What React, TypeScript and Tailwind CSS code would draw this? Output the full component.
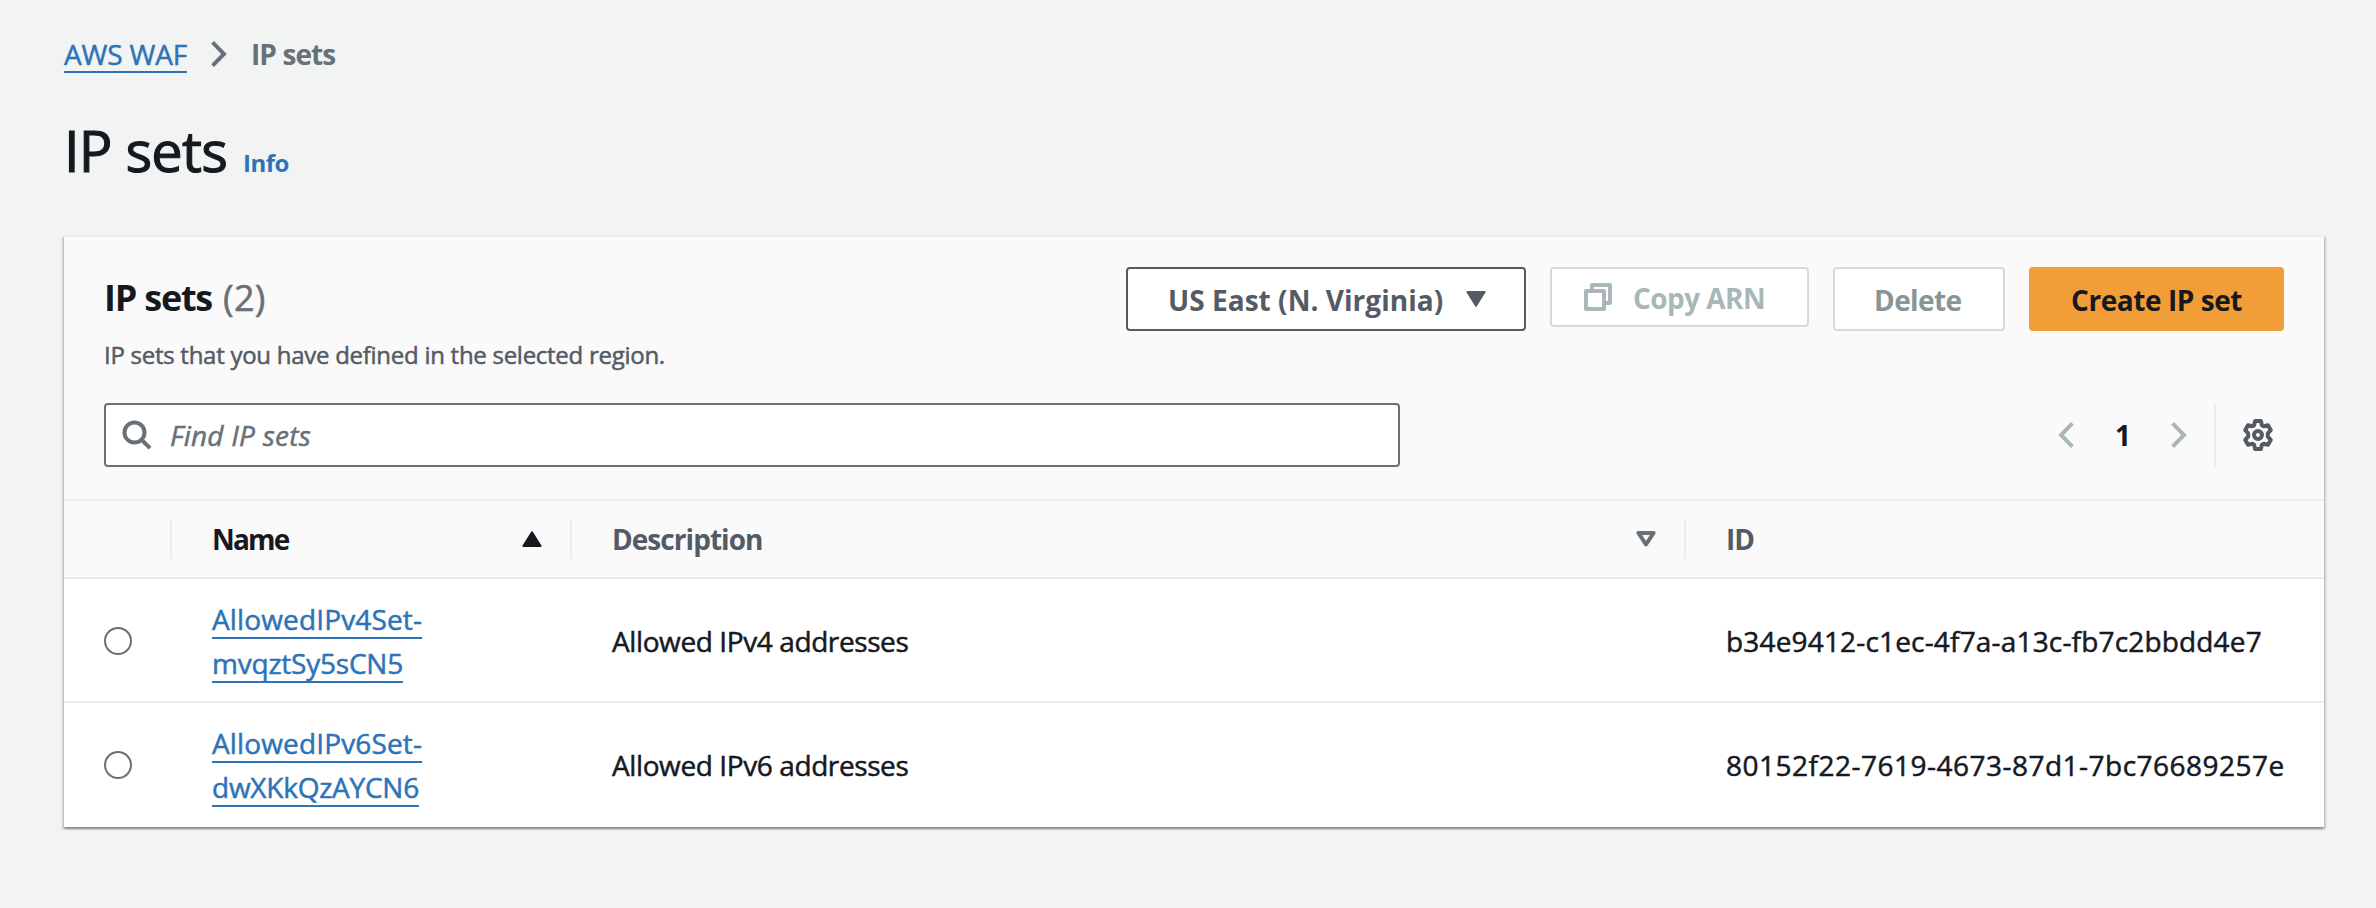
import type { ReactNode } from "react";

const rows = [
  {
    name: ["AllowedIPv4Set-", "mvqztSy5sCN5"],
    tracking: ["tracking-[0.14px]", "tracking-[-0.22px]"],
    description: "Allowed IPv4 addresses",
    id: "b34e9412-c1ec-4f7a-a13c-fb7c2bbdd4e7",
    idTracking: "tracking-[0.17px]",
  },
  {
    name: ["AllowedIPv6Set-", "dwXKkQzAYCN6"],
    tracking: ["tracking-[0.14px]", "tracking-[-0.24px]"],
    description: "Allowed IPv6 addresses",
    id: "80152f22-7619-4673-87d1-7bc76689257e",
    idTracking: "tracking-[0.49px]",
  },
];

const linkClass = "text-[#2e73b8] underline decoration-2 [text-decoration-skip-ink:none]";

function Chevron({ flip = false, className }: { flip?: boolean; className: string }) {
  return (
    <svg
      viewBox="0 0 16 28"
      className={`h-7 w-4 shrink-0 ${flip ? "-scale-x-100" : ""} ${className}`}
      fill="none"
      stroke="currentColor"
      strokeWidth="4"
    >
      <path d="M1.6 2.4 13 14 1.6 25.6" />
    </svg>
  );
}

function Triangle({ kind, className = "" }: { kind: "up" | "down" | "outline"; className?: string }) {
  const outline = kind === "outline";
  return (
    <svg
      viewBox="0 0 20 16"
      className={`h-4 w-5 shrink-0 ${kind === "up" ? "rotate-180" : ""} ${className}`}
      fill={outline ? "none" : "currentColor"}
      stroke="currentColor"
      strokeWidth={outline ? 4 : 2}
      strokeLinejoin="round"
    >
      <path d={outline ? "M2.4 2h15.2L10 13.4Z" : "M1.4 1h17.2L10 14.6Z"} />
    </svg>
  );
}

function SearchIcon() {
  return (
    <svg viewBox="0 0 30 30" className="h-[30px] w-[30px] text-[#687078]" fill="none" stroke="currentColor" strokeWidth="4">
      <circle cx="12.5" cy="12.5" r="10" />
      <path d="M19.5 19.7 28.1 28.1" />
    </svg>
  );
}

function CopyIcon() {
  return (
    <svg viewBox="0 0 28 28" className="h-7 w-7 text-[#aab7b8]" fill="none" stroke="currentColor" strokeWidth="4" strokeLinejoin="round">
      <path d="M8 6V2h18v18h-4" />
      <path d="M2 8h18v18H2z" />
    </svg>
  );
}

function GearIcon() {
  return (
    <svg viewBox="0 0 32 32" className="h-8 w-8 text-[#545b64]" fill="none" stroke="currentColor" strokeWidth="4" strokeLinejoin="round">
      <path d="M13.1 2h5.8l1 4.2 1.8 1.1 4.3-1.1 2.8 5-3 3.1v3.4l3 3.1-2.8 5-4.3-1.1-1.8 1.1-1 4.2h-5.8l-1-4.2-1.8-1.1L6 25.8l-2.8-5 3-3.1v-3.4l-3-3.1 2.8-5 4.3 1.1 1.8-1.1Z" />
      <circle cx="16" cy="16" r="4" />
    </svg>
  );
}

function Separator({ className = "" }: { className?: string }) {
  return <div className={`w-0.5 shrink-0 bg-[#eaeded] ${className}`} />;
}

function Button({ className, children }: { className: string; children: ReactNode }) {
  return (
    <button className={`flex items-center rounded-[4px] border-2 font-bold [-webkit-text-stroke:0px] ${className}`}>
      {children}
    </button>
  );
}

export default function App() {
  return (
    <main className="min-h-[908px] bg-[#f2f4f3] px-16 pt-8 font-['Open_Sans','Noto_Sans',sans-serif] text-[28px] leading-[44px] text-[#16191f] [-webkit-text-stroke:0.5px]">
      <nav className="flex h-11 items-center whitespace-nowrap">
        <a className={`w-[123px] tracking-[-0.17px] underline-offset-[6px] ${linkClass}`}>AWS WAF</a>
        <Chevron className="ml-6 text-[#687078]" />
        <span className="ml-6 font-bold tracking-[-0.9px] text-[#687078] [-webkit-text-stroke:0px]">IP sets</span>
      </nav>

      <header className="mt-10 flex h-[68px] items-baseline whitespace-nowrap leading-[68px]">
        <h1 className="w-[179px] text-[56px] tracking-[-0.8px] [-webkit-text-stroke:1.1px]">IP sets</h1>
        <a className="text-2xl font-bold leading-[68px] tracking-[-0.47px] text-[#2e73b8] [-webkit-text-stroke:0px]">Info</a>
      </header>

      <section className="mt-[51px] w-[2260px] border-t-2 border-[#eaeded] bg-white shadow-[0_2px_2px_rgba(0,28,36,0.3),2px_2px_2px_rgba(0,28,36,0.15),-2px_2px_2px_rgba(0,28,36,0.15)]">
        <div className="h-[264px] border-b-2 border-[#eaeded] bg-[#fafafa] px-10 pt-[30px]">
          <div className="flex h-[136px] items-start justify-between whitespace-nowrap">
            <div className="pt-[9px]">
              <h2 className="flex gap-[11px] text-4xl leading-[44px]">
                <span className="font-bold tracking-[-1.22px] [-webkit-text-stroke:0px]">IP sets</span>
                <span className="tracking-[0.3px] text-[#687078]">(2)</span>
              </h2>
              <p className="mt-[17px] text-2xl leading-9 tracking-[-0.27px] text-[#545b64]">
                IP sets that you have defined in the selected region.
              </p>
            </div>
            <div className="flex items-start gap-6">
              <Button className="h-16 w-[400px] gap-[23px] border-[#545b64] bg-white pl-10 text-[#545b64]">
                <span className="pt-px tracking-[0.04px]">US East (N. Virginia)</span>
                <Triangle kind="down" />
              </Button>
              <Button className="h-[60px] w-[259px] gap-[21px] border-[#d5dbdb] bg-white pl-8 tracking-[-0.55px] text-[#aab7b8]">
                <CopyIcon />
                <span className="pt-px">Copy ARN</span>
              </Button>
              <Button className="h-16 w-[172px] border-[#d5dbdb] bg-white pl-[39px] tracking-[-0.6px] text-[#879596]">
                <span className="pt-px">Delete</span>
              </Button>
              <Button className="h-16 w-[255px] justify-center border-[#f19e38] bg-[#f19e38] tracking-[-0.44px] text-[#16191f]">
                <span className="pt-px">Create IP set</span>
              </Button>
            </div>
          </div>

          <div className="flex h-16 items-center justify-between">
            <div className="flex h-16 w-[1296px] items-center gap-[18px] rounded-[4px] border-2 border-[#687078] bg-white pl-4">
              <SearchIcon />
              <span className="italic tracking-[0.25px] text-[#687078]">Find IP sets</span>
            </div>
            <div className="flex h-16 items-center pr-[10px]">
              <Chevron flip className="text-[#aab7b8]" />
              <span className="w-[97px] pl-px text-center font-bold [-webkit-text-stroke:0px]">1</span>
              <Chevron className="text-[#aab7b8]" />
              <Separator className="ml-[27px] mr-[26px] h-16" />
              <GearIcon />
            </div>
          </div>
        </div>

        <div className="grid h-[78px] grid-cols-[106px_400px_1114px_1fr] items-center border-b-2 border-[#eaeded] bg-[#fafafa] font-bold text-[#545b64] [-webkit-text-stroke:0px]">
          <div />
          <div className="flex items-center">
            <Separator className="h-10" />
            <span className="ml-10 flex-1 tracking-[-1.8px] text-[#16191f]">Name</span>
            <Triangle kind="up" className="mr-[28px] text-[#16191f]" />
          </div>
          <div className="flex items-center">
            <Separator className="h-10" />
            <span className="ml-10 flex-1 tracking-[-0.95px]">Description</span>
            <Triangle kind="outline" className="mr-[28px] text-[#687078]" />
          </div>
          <div className="flex items-center">
            <Separator className="h-10" />
            <span className="ml-10 tracking-[-1px]">ID</span>
          </div>
        </div>

        {rows.map((row, i) => (
          <div
            key={row.id}
            className={`grid h-[124px] grid-cols-[148px_400px_1114px_1fr] items-center whitespace-nowrap ${
              i < rows.length - 1 ? "border-b-2 border-[#eaeded] pt-0.5" : ""
            }`}
          >
            <div className="ml-10 h-7 w-7 rounded-full border-2 border-[#687078] bg-white" />
            <div className="flex flex-col items-start">
              {row.name.map((part, j) => (
                <a key={part} className={`underline-offset-[7px] ${linkClass} ${row.tracking[j]}`}>
                  {part}
                </a>
              ))}
            </div>
            <div className="tracking-[-0.4px]">{row.description}</div>
            <div className={row.idTracking}>{row.id}</div>
          </div>
        ))}
      </section>
    </main>
  );
}
